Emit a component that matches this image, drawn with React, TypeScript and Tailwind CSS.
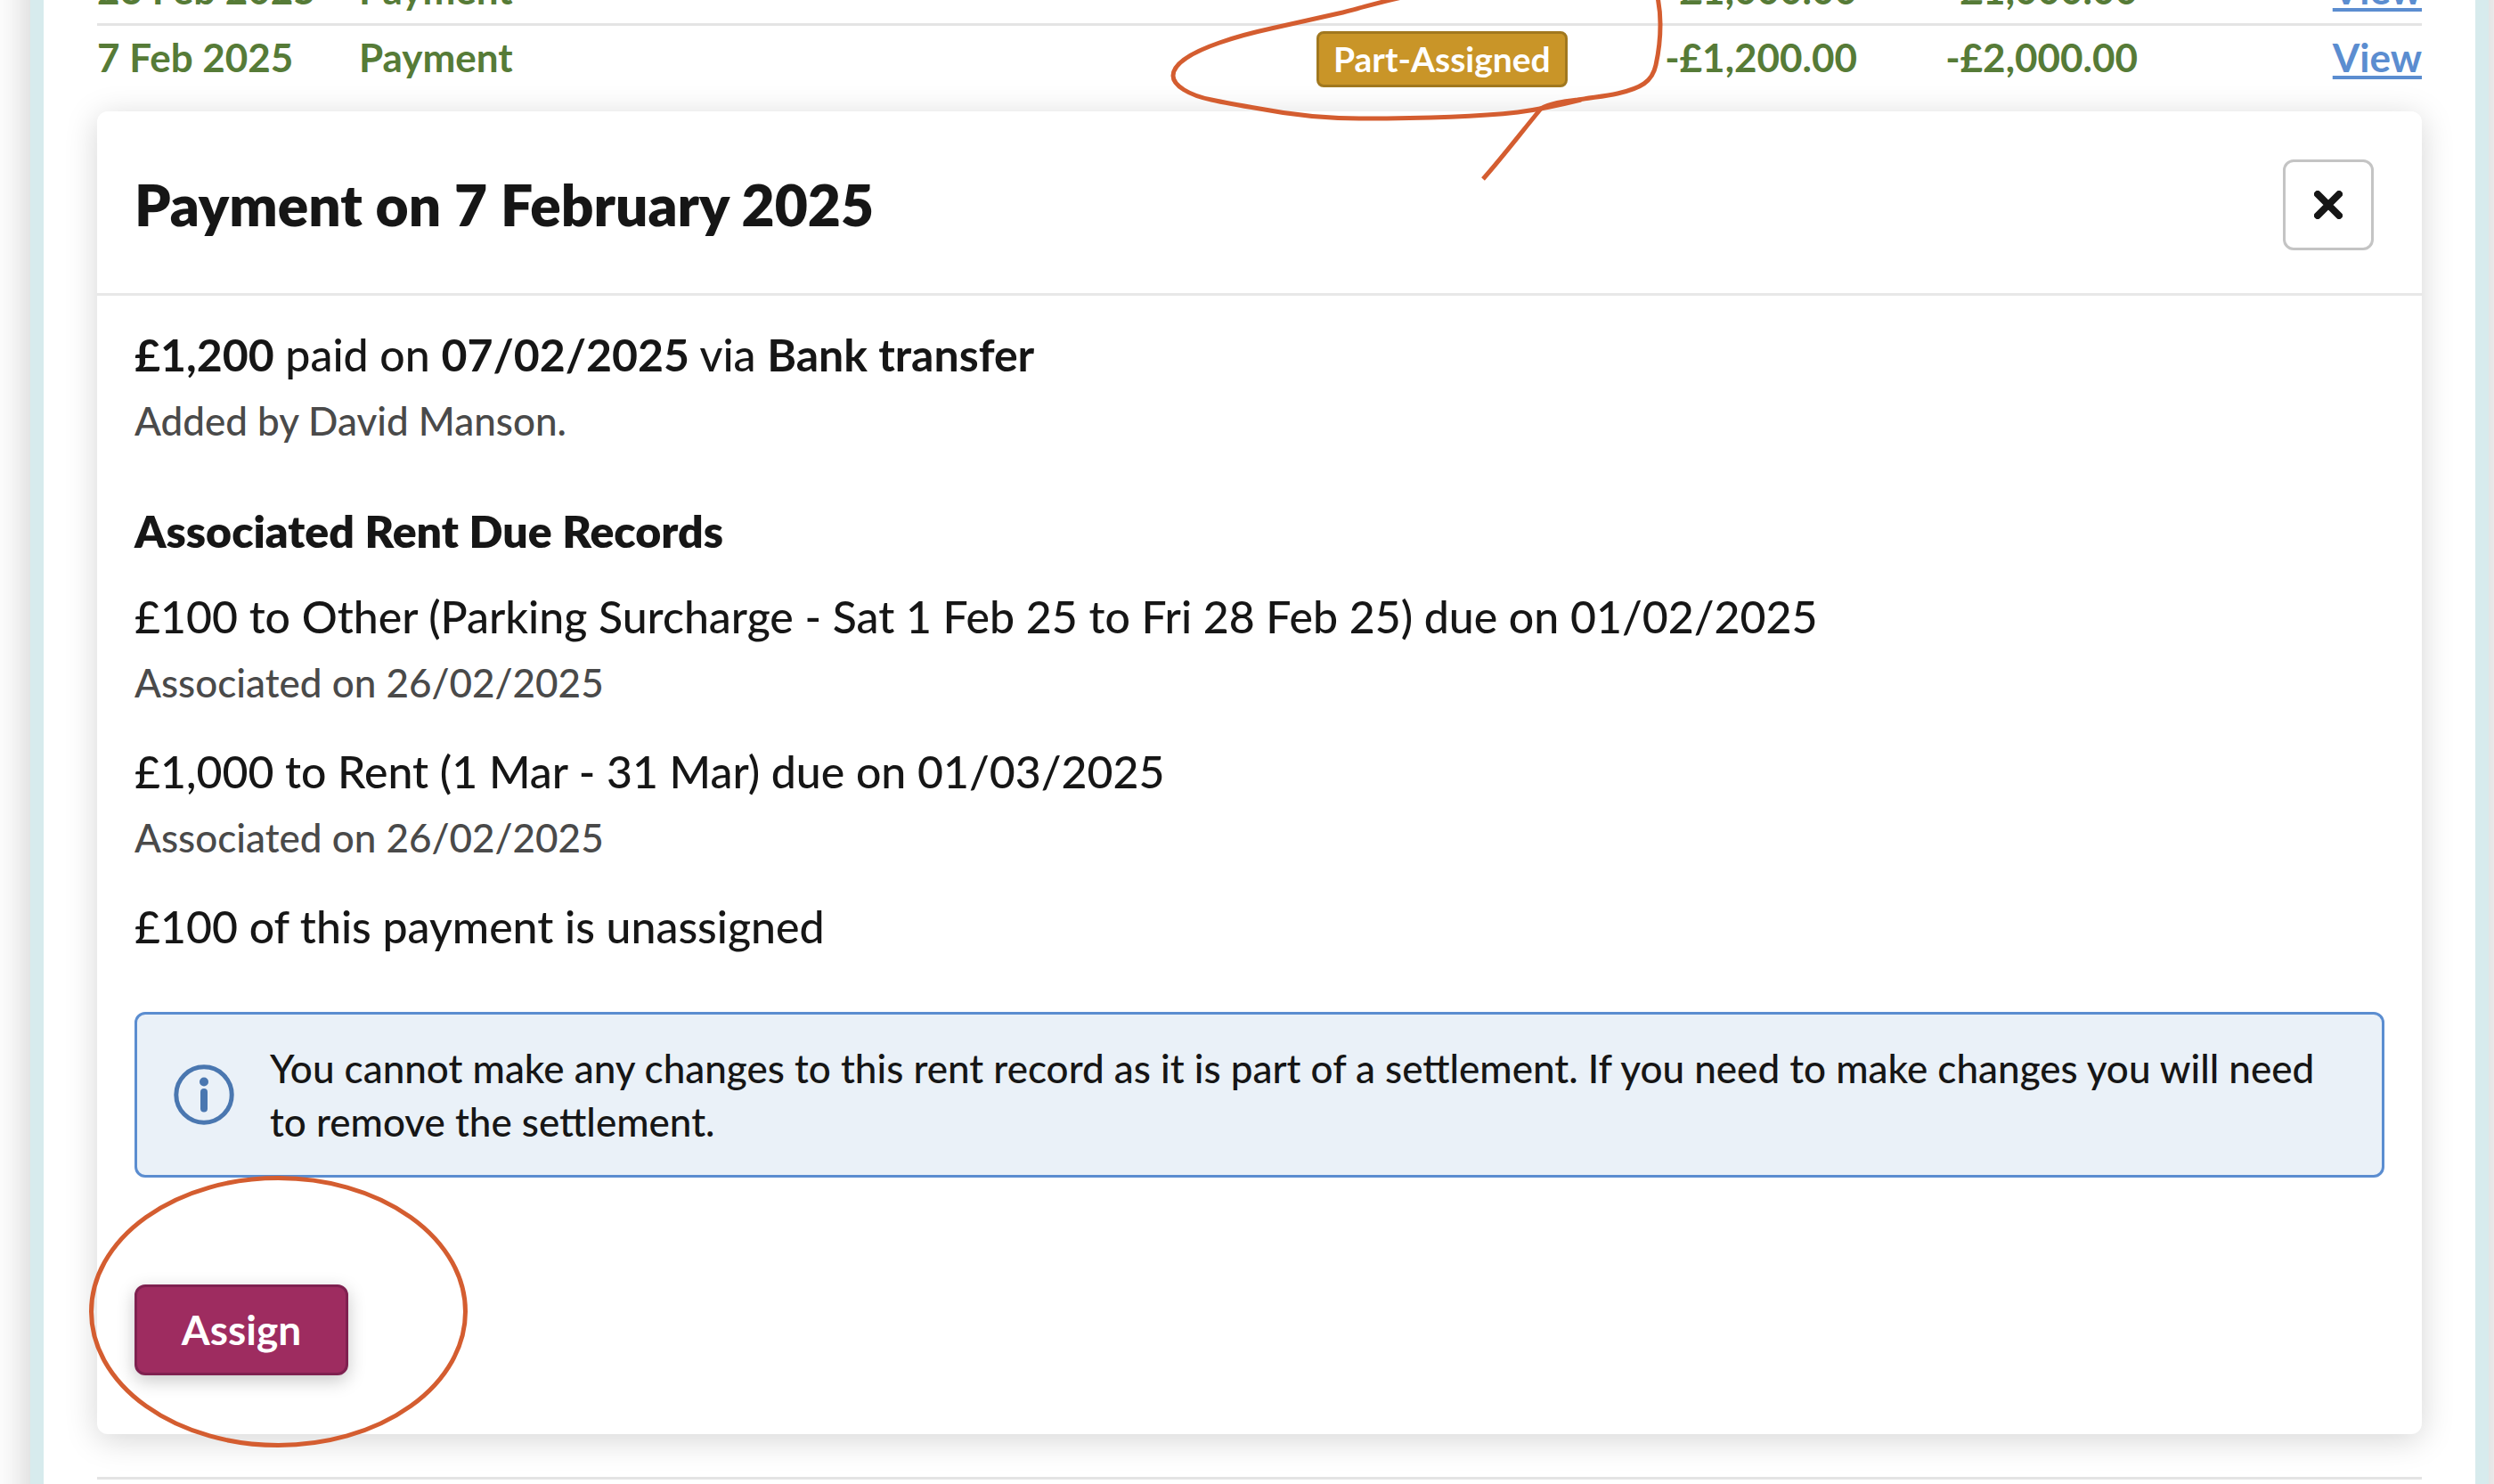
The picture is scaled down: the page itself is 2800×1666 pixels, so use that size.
import React from "react";

type Payment = {
  date: string;
  type: string;
  status?: string;
  amount: string;
  balance: string;
};

type Association = {
  title: string;
  associated: string;
};

const payments: Payment[] = [
  {
    date: "26 Feb 2025",
    type: "Payment",
    amount: "-£1,000.00",
    balance: "-£1,000.00",
  },
  {
    date: "7 Feb 2025",
    type: "Payment",
    status: "Part-Assigned",
    amount: "-£1,200.00",
    balance: "-£2,000.00",
  },
];

const associations: Association[] = [
  {
    title:
      "£100 to Other (Parking Surcharge - Sat 1 Feb 25 to Fri 28 Feb 25) due on 01/02/2025",
    associated: "Associated on 26/02/2025",
  },
  {
    title: "£1,000 to Rent (1 Mar - 31 Mar) due on 01/03/2025",
    associated: "Associated on 26/02/2025",
  },
];

function CloseIcon() {
  return (
    <svg
      viewBox="0 0 32 32"
      className="size-8"
      fill="none"
      stroke="currentColor"
      strokeWidth="8"
      strokeLinecap="round"
      aria-hidden="true"
    >
      <path d="M4 4 28 28M28 4 4 28" />
    </svg>
  );
}

function InfoIcon() {
  return (
    <svg
      viewBox="0 0 68 68"
      className="size-[68px] shrink-0 text-[#4a77b0]"
      aria-hidden="true"
    >
      <circle
        cx="34"
        cy="34"
        r="31.2"
        fill="none"
        stroke="currentColor"
        strokeWidth="5"
      />
      <circle cx="34" cy="19.5" r="5" fill="currentColor" />
      <rect x="30" y="27" width="8" height="26.5" rx="4" fill="currentColor" />
    </svg>
  );
}

// Pen stroke drawn loosely round the status badge
function StatusScribble() {
  return (
    <svg
      viewBox="1313 -5 560 215"
      className="pointer-events-none absolute -top-10 -left-[165px] z-10 h-[215px] w-[560px] max-w-none"
      fill="none"
      stroke="#d45d30"
      strokeWidth="5"
      strokeLinejoin="round"
      aria-hidden="true"
    >
      <path d="M1574 -3C1550 2 1528 9 1503 15L1427 32C1404 37 1386 42 1369 48C1340 58 1317 71 1317 85C1317 96 1335 107 1360 112C1378 116 1396 119 1414 122C1445 128 1480 133 1530 133C1590 133 1650 132 1704 126C1735 122 1755 117 1775 112" />
      <path d="M1665 201C1688 175 1710 146 1730 122C1740 116 1755 114 1771 112C1790 109 1803 108 1816 105C1842 99 1855 92 1859 73C1863 55 1864 42 1864 27C1864 16 1863 7 1861 -3" />
    </svg>
  );
}

function AssignRing() {
  return (
    <svg
      viewBox="0 0 425 305"
      className="pointer-events-none absolute -top-[122px] -left-[51px] z-10 h-[305px] w-[425px] max-w-none"
      fill="none"
      stroke="#d45d30"
      strokeWidth="5"
      aria-hidden="true"
    >
      <ellipse cx="212.5" cy="152.5" rx="210" ry="150" />
    </svg>
  );
}

function PaymentRow({ payment }: { payment: Payment }) {
  return (
    <tr className="*:h-[76px] *:border-t-3 *:border-[#e4e4e4] *:px-0 *:pt-0 *:pb-1">
      <td>{payment.date}</td>
      <td>{payment.type}</td>
      <td>
        {payment.status && (
          <div className="relative mt-1.5 flex w-fit">
            <span className="flex h-[63px] items-center rounded-lg border-3 border-[#a1781f] bg-[#c99528] px-4 text-[39px] text-white">
              {payment.status}
            </span>
            <StatusScribble />
          </div>
        )}
      </td>
      <td className="text-right">{payment.amount}</td>
      <td className="text-right">{payment.balance}</td>
      <td className="text-right">
        <a
          href="#payment"
          className="text-[#5b8dd0] underline decoration-4 underline-offset-4"
        >
          View
        </a>
      </td>
    </tr>
  );
}

function PaymentDetails() {
  return (
    <section className="rounded-xl bg-white text-[#161616] shadow-[0_6px_36px_rgba(0,0,0,0.17)]">
      <header className="flex h-[207px] items-center justify-between border-b-3 border-[#e8e8e8] pt-1.5 pr-[54px] pl-[42px]">
        <h2 className="text-[64px] font-extrabold">
          Payment on 7 February 2025
        </h2>
        <button
          type="button"
          aria-label="Close"
          className="flex size-[102px] items-center justify-center rounded-xl border-3 border-[#c4c4c4] bg-white"
        >
          <CloseIcon />
        </button>
      </header>

      <div className="px-[42px] pt-7 pb-[66px] text-[50px] leading-[76px] font-medium">
        <p>
          <b className="font-bold">£1,200</b> paid on{" "}
          <b className="font-bold">07/02/2025</b> via{" "}
          <b className="font-bold">Bank transfer</b>
        </p>
        <p className="text-[44px] leading-[72px] text-[#4a4a4a]">
          Added by David Manson.
        </p>

        <h3 className="mt-[50px] mb-5 font-extrabold">
          Associated Rent Due Records
        </h3>
        <ul className="flex flex-col gap-[26px]">
          {associations.map((item) => (
            <li key={item.title}>
              <p>{item.title}</p>
              <p className="text-[44px] leading-[72px] text-[#4a4a4a]">
                {item.associated}
              </p>
            </li>
          ))}
          <li>£100 of this payment is unassigned</li>
        </ul>

        <div
          role="note"
          className="mt-[58px] flex items-center gap-10 rounded-xl border-3 border-[#5b8dd0] bg-[#eaf1f8] px-[41px] py-[30px] text-[44px] leading-[60px]"
        >
          <InfoIcon />
          <p>
            You cannot make any changes to this rent record as it is part of a
            settlement. If you need to make changes you will need to remove the
            settlement.
          </p>
        </div>

        <div className="relative mt-[120px] w-fit">
          <button
            type="button"
            className="flex h-[102px] w-[240px] items-center justify-center rounded-xl border-3 border-[#7f2150] bg-[#9e2c60] text-[46px] font-bold text-white shadow-[0_6px_20px_rgba(0,0,0,0.22)]"
          >
            Assign
          </button>
          <AssignRing />
        </div>
      </div>
    </section>
  );
}

export default function App() {
  return (
    <div className="h-screen overflow-hidden bg-white font-[Lato,sans-serif]">
      {/* scrolled part way through the first row */}
      <main className="-mt-[50px] mr-1.5 ml-[34px] min-h-[calc(100vh+100px)] border-x-15 border-[#d7ebed] bg-white px-[60px] shadow-[0_0_44px_rgba(0,0,0,0.22)]">
        <table className="w-full table-fixed border-separate border-spacing-0 text-left text-[44px] leading-none font-bold text-[#567b37]">
          <colgroup>
            <col className="w-[294px]" />
            <col />
            <col className="w-[298px]" />
            <col className="w-[309px]" />
            <col className="w-[315px]" />
            <col className="w-[319px]" />
          </colgroup>
          <tbody>
            {payments.map((payment) => (
              <PaymentRow key={payment.date} payment={payment} />
            ))}
            <tr>
              <td
                colSpan={6}
                className="border-b-3 border-[#e4e4e4] px-0 pt-[23px] pb-12"
              >
                <PaymentDetails />
              </td>
            </tr>
          </tbody>
        </table>
      </main>
    </div>
  );
}
